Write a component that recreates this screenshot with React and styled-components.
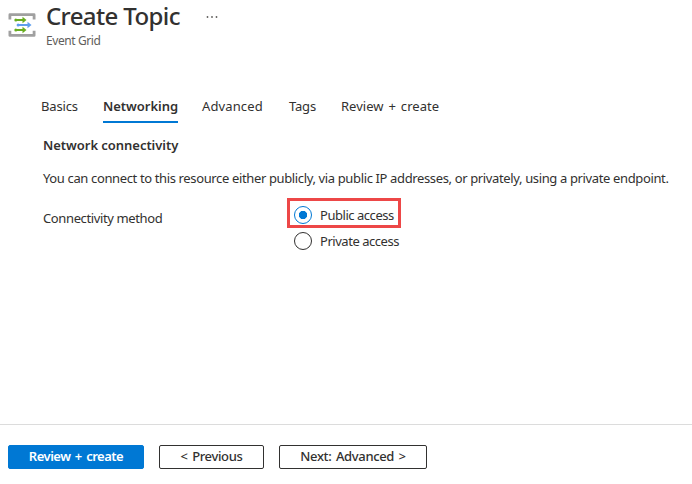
import React, { useState } from 'react';
import styled, { createGlobalStyle } from 'styled-components';

const GlobalStyle = createGlobalStyle`
  *, *::before, *::after { box-sizing: border-box; }
  body {
    margin: 0;
    background: #fff;
    color: #323130;
    font: 13px/20px "Noto Sans", "Open Sans", sans-serif;
  }
  button { font: inherit; color: inherit; }
`;

const Page = styled.div`
  display: flex;
  flex-direction: column;
  width: 692px;
  height: 484px;
  overflow: hidden;
  white-space: nowrap;
`;

const Header = styled.header`
  display: flex;
  height: 96px;
  padding-left: 8px;
`;

const TopicIcon = styled.svg`
  width: 28px;
  height: 26px;
  margin-top: 12px;
`;

const Heading = styled.div`
  margin-left: 10px;
  width: 159px;
`;

const Title = styled.h1`
  margin: 0;
  padding-bottom: 1px;
  font-size: 24px;
  line-height: 32px;
  font-weight: 500;
  letter-spacing: -0.62px;
`;

const Subtitle = styled.div`
  font-size: 12px;
  line-height: 16px;
  letter-spacing: -0.42px;
  color: #605e5c;
`;

const MoreIcon = styled.svg`
  width: 14px;
  height: 4px;
  margin-top: 15px;
`;

const Tabs = styled.nav`
  display: flex;
  height: 27px;
  padding-left: 41px;
`;

const Tab = styled.button`
  flex: none;
  width: ${(p) => p.$width}px;
  margin: 0 ${(p) => p.$gap}px 0 0;
  padding: 0 0 5px;
  border: 0;
  border-bottom: 2px solid ${(p) => (p.$active ? '#0078d4' : 'transparent')};
  background: none;
  text-align: left;
  line-height: 20px;
  font-weight: ${(p) => (p.$active ? 600 : 400)};
  letter-spacing: ${(p) => p.$spacing}px;
  word-spacing: 1.5px;
`;

const Main = styled.main`
  height: 301px;
  padding: 12px 0 0 43px;
`;

const SectionTitle = styled.h2`
  margin: 0 0 13px;
  font-size: 13px;
  line-height: 20px;
  font-weight: 600;
  letter-spacing: -0.04px;
`;

const Description = styled.p`
  margin: 0;
  letter-spacing: -0.365px;
`;

const Field = styled.div`
  display: flex;
  padding-top: 10px;
`;

const FieldLabel = styled.div`
  width: 244px;
  padding-top: 10px;
  letter-spacing: -0.38px;
`;

const Options = styled.div`
  display: flex;
  flex-direction: column;
`;

const Option = styled.label`
  display: flex;
  align-items: center;
  width: 114px;
  height: ${(p) => (p.$highlighted ? 30 : 22)}px;
  padding-left: ${(p) => (p.$highlighted ? 4 : 7)}px;
  padding-top: 4px;
  border: ${(p) => (p.$highlighted ? '3px solid #ed4747' : '0')};
  letter-spacing: -0.46px;
`;

const Radio = styled.input`
  appearance: none;
  flex: none;
  width: 18px;
  height: 18px;
  margin: 0 8px 0 0;
  border: 1px solid #323130;
  border-radius: 50%;
  &:checked {
    border-color: #0078d4;
    background: radial-gradient(circle, #0078d4 3.8px, transparent 4.5px);
  }
`;

const Footer = styled.footer`
  display: flex;
  gap: 15px;
  height: 60px;
  padding: 20px 8px 0;
  border-top: 1px solid #dcdcdc;
`;

const Button = styled.button`
  width: ${(p) => p.$width}px;
  height: 24px;
  padding: 0 0 2px;
  border: 1px solid ${(p) => (p.$primary ? '#0078d4' : '#323130')};
  border-radius: 2px;
  background: ${(p) => (p.$primary ? '#0078d4' : '#fff')};
  color: ${(p) => (p.$primary ? '#fff' : '#323130')};
  line-height: 20px;
  font-weight: ${(p) => (p.$primary ? 600 : 500)};
  letter-spacing: ${(p) => p.$spacing}px;
  word-spacing: 1.5px;
`;

const tabs = [
  { label: 'Basics', width: 37, gap: 25, spacing: -0.15 },
  { label: 'Networking', width: 75, gap: 24, spacing: -0.04 },
  { label: 'Advanced', width: 61, gap: 26, spacing: 0.12 },
  { label: 'Tags', width: 27, gap: 25, spacing: -0.2 },
  { label: 'Review + create', width: 98, gap: 0, spacing: 0.03 },
];

const Arrow = ({ x, y, length, color }) => (
  <g transform={`translate(${x} ${y})`} fill={color}>
    <circle cx="1.3" cy="0" r="1.5" />
    <rect x="1" y="-1" width={length - 3} height="2" />
    <path d={`M${length - 4} -3.2 L${length} 0 L${length - 4} 3.2Z`} />
  </g>
);

export default function App() {
  const [active, setActive] = useState('Networking');
  const [access, setAccess] = useState('public');
  return (
    <Page>
      <GlobalStyle />
      <Header>
        <TopicIcon viewBox="0 0 28 26" aria-hidden="true">
          <path d="M1.9 7.4V2.7H26.1V7.4M1.9 18.8V23.4H26.1V18.8" fill="none" stroke="#a0a0a0" strokeWidth="2.8" strokeLinejoin="round" />
          <Arrow x={6.5} y={8} length={12} color="#68ad20" />
          <Arrow x={8.8} y={13} length={14.7} color="#5e9eed" />
          <Arrow x={6.5} y={18} length={12} color="#68ad20" />
        </TopicIcon>
        <Heading>
          <Title>Create Topic</Title>
          <Subtitle>Event Grid</Subtitle>
        </Heading>
        <MoreIcon viewBox="0 0 14 4" fill="#605e5c" aria-label="More">
          <circle cx="2.5" cy="2" r="0.9" />
          <circle cx="7" cy="2" r="0.9" />
          <circle cx="11.5" cy="2" r="0.9" />
        </MoreIcon>
      </Header>
      <Tabs>
        {tabs.map((t) => (
          <Tab key={t.label} $width={t.width} $gap={t.gap} $spacing={t.spacing} $active={active === t.label} onClick={() => setActive(t.label)}>
            {t.label}
          </Tab>
        ))}
      </Tabs>
      <Main>
        <SectionTitle>Network connectivity</SectionTitle>
        <Description>
          You can connect to this resource either publicly, via public IP addresses, or privately, using a private endpoint.
        </Description>
        <Field>
          <FieldLabel>Connectivity method</FieldLabel>
          <Options>
            <Option $highlighted>
              <Radio type="radio" name="access" checked={access === 'public'} onChange={() => setAccess('public')} />
              Public access
            </Option>
            <Option>
              <Radio type="radio" name="access" checked={access === 'private'} onChange={() => setAccess('private')} />
              Private access
            </Option>
          </Options>
        </Field>
      </Main>
      <Footer>
        <Button $primary $width={136} $spacing={-0.5}>Review + create</Button>
        <Button $width={105} $spacing={-0.35}>&lt; Previous</Button>
        <Button $width={148} $spacing={-0.35}>Next: Advanced &gt;</Button>
      </Footer>
    </Page>
  );
}
